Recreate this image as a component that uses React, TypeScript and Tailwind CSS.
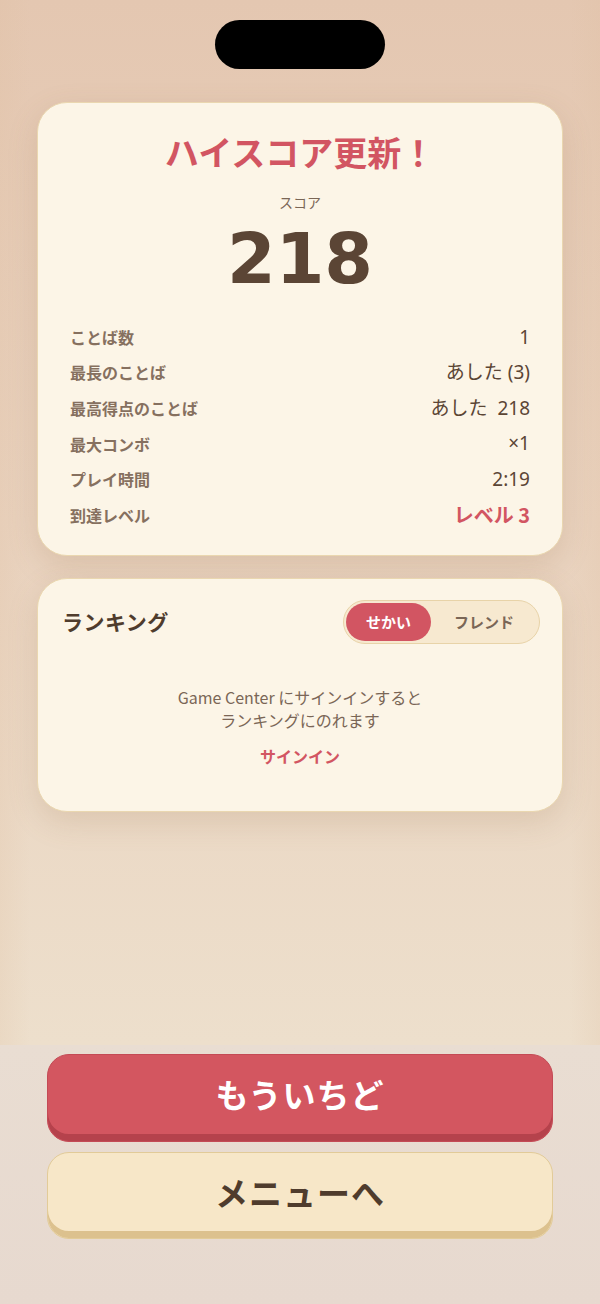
import React from 'react';

const stats = [
  { label: 'ことば数', value: '1' },
  { label: '最長のことば', value: 'あした (3)' },
  { label: '最高得点のことば', value: 'あした  218' },
  { label: '最大コンボ', value: '×1' },
  { label: 'プレイ時間', value: '2:19' },
];

export default function App() {
  return (
    <div
      className="w-[600px] h-[1304px] flex flex-col overflow-hidden relative bg-[linear-gradient(180deg,#e4c7b1_0%,#e9d2be_40%,#eddfcc_80%,#ecdcca_100%)]"
      style={{ fontFamily: '"Noto Sans CJK JP", "Noto Sans", sans-serif' }}
    >
      {/* Side vignette */}
      <div className="absolute inset-0 pointer-events-none bg-[linear-gradient(90deg,rgba(222,190,160,0.2)_0%,rgba(0,0,0,0)_5%,rgba(0,0,0,0)_95%,rgba(222,190,160,0.2)_100%)]"></div>

      {/* Dynamic island */}
      <div className="flex justify-center pt-[20px] relative">
        <div className="w-[170px] h-[49px] bg-black rounded-full"></div>
      </div>

      {/* Result card */}
      <div className="relative mx-[37px] mt-[33px] h-[454px] rounded-[30px] bg-[#fcf5e7] border border-[#ead7b0] shadow-[0_10px_30px_rgba(150,110,70,0.18)] flex flex-col items-center px-[32px]">
        <div className="mt-[26px] text-[34px] leading-[46px] font-bold text-[#d25562]">
          ハイスコア更新！
        </div>
        <div className="mt-[18px] text-[14px] leading-[19px] text-[#7a6656]">スコア</div>
        <div
          className="mt-[6px] text-[70px] leading-[82px] font-bold text-[#5b4535]"
          style={{ fontFamily: '"DejaVu Sans", "Noto Sans", sans-serif' }}
        >
          218
        </div>
        <div className="w-full mt-[19px] flex flex-col">
          {stats.map((s) => (
            <div key={s.label} className="flex justify-between items-center h-[35.6px]">
              <span className="text-[16px] font-semibold text-[#86705f]">{s.label}</span>
              <span
                className="text-[19px] text-[#5b4535] whitespace-pre"
                style={{ fontFamily: '"Noto Sans", "Noto Sans CJK JP", sans-serif' }}
              >
                {s.value}
              </span>
            </div>
          ))}
          <div className="flex justify-between items-center h-[35.6px]">
            <span className="text-[16px] font-semibold text-[#86705f]">到達レベル</span>
            <span className="text-[20px] font-bold text-[#d25562]">レベル 3</span>
          </div>
        </div>
      </div>

      {/* Ranking card */}
      <div className="relative mx-[37px] mt-[22px] h-[234px] rounded-[30px] bg-[#fcf5e7] border border-[#ead7b0] shadow-[0_10px_30px_rgba(150,110,70,0.18)] flex flex-col px-[24px]">
        <div className="flex justify-between items-center mt-[21px]">
          <span className="text-[21px] font-bold text-[#4f3c2d] tracking-[0.5px]">ランキング</span>
          <div className="flex items-center h-[44px] w-[197px] rounded-full bg-[#f7e9d0] border border-[#e8d3a8] p-[2px] -mr-[2px]">
            <div className="h-[38px] w-[85px] rounded-full bg-[#d25562] flex items-center justify-center text-[15px] font-bold text-white">
              せかい
            </div>
            <div className="flex-1 flex items-center justify-center text-[15px] font-semibold text-[#7a6656]">
              フレンド
            </div>
          </div>
        </div>
        <div className="mt-[42px] flex flex-col items-center text-[16px] leading-[23px] text-[#7a6656]">
          <span>Game Center にサインインすると</span>
          <span>ランキングにのれます</span>
        </div>
        <div className="mt-[12px] text-center text-[16px] font-bold text-[#d25562]">サインイン</div>
      </div>

      <div className="flex-1"></div>

      {/* Bottom buttons */}
      <div className="relative h-[259px] bg-[linear-gradient(180deg,#e9ddd2_0%,#e7d9cf_100%)] px-[47px] pt-[9px] flex flex-col gap-[10px]">
        <button className="h-[88px] rounded-[22px] bg-[#d35660] border border-[#c44a55] shadow-[inset_0_-7px_0_#b5424c] pb-[6px] flex items-center justify-center text-[33px] font-bold text-white tracking-[1px]">
          もういちど
        </button>
        <button className="h-[87px] rounded-[22px] bg-[#f7e7c8] border border-[#e2cb98] shadow-[inset_0_-7px_0_#dcc18e] pb-[6px] flex items-center justify-center text-[33px] font-bold text-[#4f3c2d] tracking-[1px]">
          メニューへ
        </button>
      </div>
    </div>
  );
}
